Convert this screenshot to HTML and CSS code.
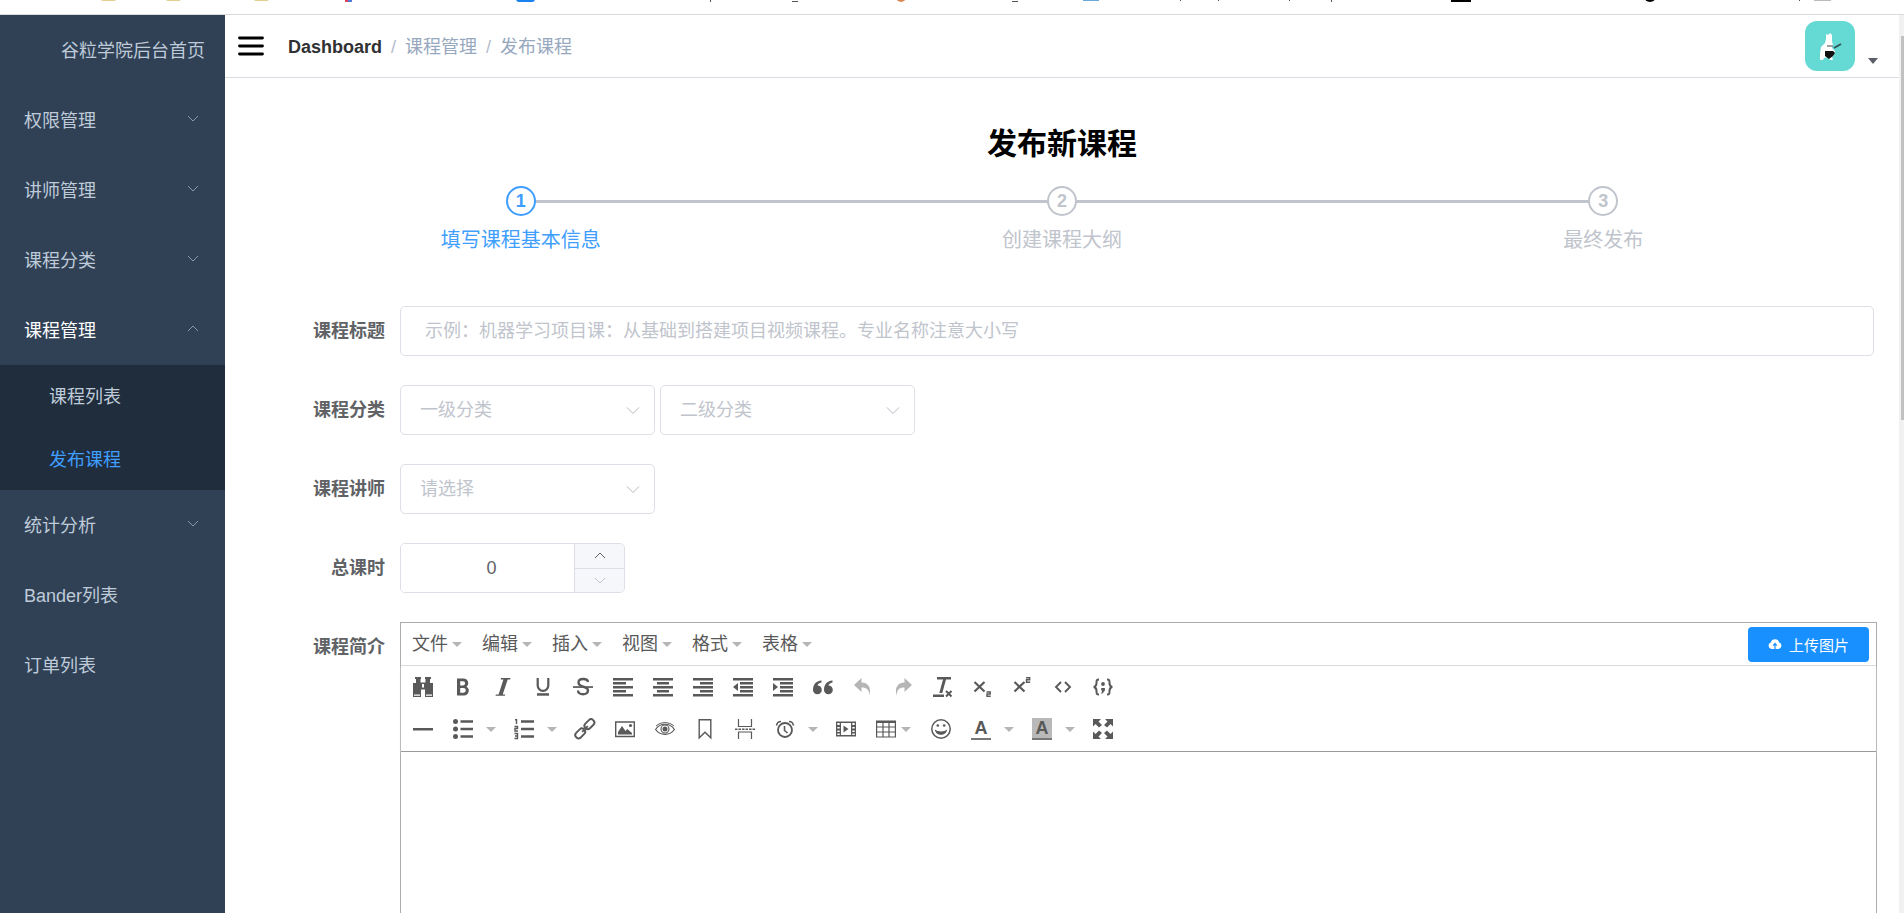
FILE: index.html
```html
<!DOCTYPE html>
<html lang="zh-CN">
<head>
<meta charset="utf-8">
<title>发布新课程</title>
<link rel="stylesheet" href="styles.css">
</head>
<body>
<svg class="bookmarks" height="14" aria-hidden="true">
  <g fill="#e2cf90"><rect x="101" y="-4" width="15" height="5" rx="2"/><rect x="166" y="-4" width="15" height="5" rx="2"/><rect x="254" y="-4" width="15" height="5" rx="2"/></g>
  <rect x="345" width="4" height="2" fill="#e0405a"/><rect x="348" width="4" height="2" fill="#5578d8"/>
  <rect x="516" y="-6" width="19" height="8" rx="3" fill="#1a82f0"/>
  <g fill="#555"><rect x="710" width="1" height="2"/><rect x="792" y="1" width="6" height="1"/><rect x="1012" y="1" width="6" height="1"/><rect x="1180" width="1" height="1"/><rect x="1218" width="1" height="1"/><rect x="1289" width="1" height="1"/><rect x="1331" width="1" height="2"/><rect x="1799" width="1" height="1"/></g>
  <circle cx="901" cy="-3" r="5" fill="#d88850"/>
  <rect x="1083" width="16" height="1" fill="#6aaad8"/>
  <rect x="1451" width="20" height="2"/><circle cx="1650" cy="-4" r="6"/>
  <rect x="1814" width="17" height="1" fill="#bbb"/>
</svg>
<div class="app">
  <nav class="sidebar">
    <a class="item home" href="#">谷粒学院后台首页</a>
    <a class="item" href="#">权限管理<svg class="arrow" viewBox="0 0 12 8"><path d="M1 1l5 5 5-5"/></svg></a>
    <a class="item" href="#">讲师管理<svg class="arrow" viewBox="0 0 12 8"><path d="M1 1l5 5 5-5"/></svg></a>
    <a class="item" href="#">课程分类<svg class="arrow" viewBox="0 0 12 8"><path d="M1 1l5 5 5-5"/></svg></a>
    <a class="item open" href="#">课程管理<svg class="arrow" viewBox="0 0 12 8"><path d="M1 6l5-5 5 5"/></svg></a>
    <div class="submenu">
      <a href="#">课程列表</a>
      <a class="active" href="#">发布课程</a>
    </div>
    <a class="item" href="#">统计分析<svg class="arrow" viewBox="0 0 12 8"><path d="M1 1l5 5 5-5"/></svg></a>
    <a class="item" href="#">Bander列表</a>
    <a class="item" href="#">订单列表</a>
  </nav>
  <div class="main">
    <header class="navbar">
      <button class="hamburger" type="button" aria-label="切换菜单"><svg width="26" height="20" viewBox="0 0 26 20"><path d="M1.500 2h23M1.500 10h23M1.500 18h23" stroke="#000" stroke-width="2.800" stroke-linecap="round"/></svg></button>
      <div class="crumbs"><a href="#">Dashboard</a><i>/</i><span>课程管理</span><i>/</i><span>发布课程</span></div>
      <button class="user" type="button" aria-label="用户菜单">
        <svg class="avatar" width="50" height="50" viewBox="0 0 50 50"><rect width="50" height="50" rx="12" fill="#65d9d3"/><path d="M21 13l2 1 2-2 2 2v6l1 4-1 3 3 3-1 4-2 2 1 3h-3l-2-3-4 1-1 2h-3v-6l1-7 4-4 1-4z" fill="#fff"/><path d="M20 30h8l2 2-2 3-4 3-4-3z" fill="#111"/><path d="M29 27l7-4" stroke="#355" stroke-width="2"/><path d="M22 25h6" stroke="#444" /></svg>
        <svg class="caret-user" width="10" height="6" viewBox="0 0 10 6"><path d="M0 0h10L5 6z" fill="#5a5e66"/></svg>
      </button>
    </header>
    <div class="content">
      <h2>发布新课程</h2>
      <ol class="steps">
        <li class="current"><b>1</b><span>填写课程基本信息</span></li>
        <li><b>2</b><span>创建课程大纲</span></li>
        <li><b>3</b><span>最终发布</span></li>
      </ol>
      <form class="form">
        <div class="row"><label for="title">课程标题</label><input id="title" class="field wide" type="text" placeholder="&#160;示例：机器学习项目课：从基础到搭建项目视频课程。专业名称注意大小写"></div>
        <div class="row"><label for="cat1">课程分类</label>
          <div class="selects">
            <div class="select"><select id="cat1" class="field"><option>一级分类</option></select><svg class="chev" viewBox="0 0 14 8"><path d="M1 1l6 6 6-6"/></svg></div>
            <div class="select"><select class="field" aria-label="二级分类"><option>二级分类</option></select><svg class="chev" viewBox="0 0 14 8"><path d="M1 1l6 6 6-6"/></svg></div>
          </div>
        </div>
        <div class="row"><label for="teacher">课程讲师</label>
          <div class="select"><select id="teacher" class="field"><option>请选择</option></select><svg class="chev" viewBox="0 0 14 8"><path d="M1 1l6 6 6-6"/></svg></div>
        </div>
        <div class="row"><label for="hours">总课时</label>
          <div class="number"><input id="hours" type="text" value="0"><div class="spin"><button type="button" aria-label="增加"><svg viewBox="0 0 12 8"><path d="M1 6l5-5 5 5" stroke="#606266"/></svg></button><button type="button" aria-label="减少"><svg viewBox="0 0 12 8"><path d="M1 1l5 5 5-5" stroke="#c0c4cc"/></svg></button></div></div>
        </div>
        <div class="row grow"><label for="intro">课程简介</label>
          <div class="editor">
            <div class="menubar">
              <button type="button">文件<i class="caret"></i></button><button type="button">编辑<i class="caret"></i></button><button type="button">插入<i class="caret"></i></button><button type="button">视图<i class="caret"></i></button><button type="button">格式<i class="caret"></i></button><button type="button">表格<i class="caret"></i></button>
              <button class="upload" type="button"><svg width="14" height="12" viewBox="0 0 14 12"><path d="M3.500 11a3.300 3.300 0 0 1-.7-6.400 4.300 4.300 0 0 1 8.400 0A3.300 3.300 0 0 1 10.500 11z" fill="#fff"/><path d="M7 11V6M5.200 7.600L7 5.500l1.800 2.100" stroke="#1890ff" fill="none" stroke-width="1.200"/></svg>上传图片</button>
            </div>
            <div class="toolbars">
              <div class="toolbar">
                <button type="button" aria-label="查找替换"><svg viewBox="0 0 20 20"><path d="M2 0h6v2H7.500v3.500h5V2H12V0h6v2h-1v4h3v14h-8v-7.500H8V20H0V6h3V2H2z"/><path d="M9 7h2v3.500H9zM1 17.500h6v1.200H1zM13 17.500h6v1.200h-6z" fill="#fff"/></svg></button>
                <button type="button" aria-label="粗体"><svg viewBox="0 0 20 20"><path fill-rule="evenodd" d="M4 1.500h6.500a4.700 4.700 0 0 1 3 8.300 4.700 4.700 0 0 1-2.500 8.700H4zM7.200 4.200V8.500H10a2.100 2.100 0 0 0 0-4.300zM7.200 11v4.700h3.300a2.300 2.300 0 0 0 0-4.700z"/></svg></button>
                <button type="button" aria-label="斜体"><svg viewBox="0 0 20 20"><path d="M8 1h9.500l-.3 1.400h-2.500L9.700 17.400h2.600l-.4 1.400H2.500l.4-1.400h2.700L10.400 2.400H7.600z"/></svg></button>
                <button type="button" aria-label="下划线"><svg viewBox="0 0 20 20"><path class="s" d="M4.700 1v7.500a5.300 5.300 0 0 0 10.600 0V1" stroke-width="2.200"/><path d="M4 16.200h12v2.500H4z"/></svg></button>
                <button type="button" aria-label="删除线"><svg viewBox="0 0 20 20"><path class="s" d="M15 5C14.500 1 5.500 1 5.500 5.500c0 5.500 9.500 3 9.500 8 0 5-10 5-10 0" stroke-width="2.400"/><path d="M0 9.200h20v1.700H0z"/></svg></button>
                <button type="button" aria-label="左对齐"><svg viewBox="0 0 20 20"><path d="M0 1h20v2.500H0zM0 5h13v2.500H0zM0 9h20v2.500H0zM0 13h13v2.500H0zM0 17h20v2.500H0z"/></svg></button>
                <button type="button" aria-label="居中"><svg viewBox="0 0 20 20"><path d="M0 1h20v2.500H0zM4 5h12v2.500H4zM0 9h20v2.500H0zM4 13h12v2.500H4zM0 17h20v2.500H0z"/></svg></button>
                <button type="button" aria-label="右对齐"><svg viewBox="0 0 20 20"><path d="M0 1h20v2.500H0zM7 5h13v2.500H7zM0 9h20v2.500H0zM7 13h13v2.500H7zM0 17h20v2.500H0z"/></svg></button>
                <button type="button" aria-label="减少缩进"><svg viewBox="0 0 20 20"><path d="M0 1h20v2.500H0zM7 5h13v2.500H7zM7 9h13v2.500H7zM7 13h13v2.500H7zM0 17h20v2.500H0zM5 6v8l-5-4z"/></svg></button>
                <button type="button" aria-label="增加缩进"><svg viewBox="0 0 20 20"><path d="M0 1h20v2.500H0zM7 5h13v2.500H7zM7 9h13v2.500H7zM7 13h13v2.500H7zM0 17h20v2.500H0zM0 6v8l5-4z"/></svg></button>
                <button type="button" aria-label="引用"><svg viewBox="0 0 20 20"><path d="M4.500 8.500a4.400 4.400 0 1 1-4.500 4.400C0 7.500 3 4.200 8.500 3.600v1.800C6 6 4.800 7 4.500 8.500z"/><path transform="translate(11)" d="M4.500 8.500a4.400 4.400 0 1 1-4.500 4.400C0 7.500 3 4.200 8.500 3.600v1.800C6 6 4.800 7 4.500 8.500z"/></svg></button>
                <button class="off" type="button" aria-label="撤销"><svg viewBox="0 0 20 20"><path d="M8.500 1v4.500c7 0 10.500 6 7.500 13 .5-5.500-2-8-7.500-8V15L1 8z"/></svg></button>
                <button class="off" type="button" aria-label="重做"><svg viewBox="0 0 20 20"><path d="M11.500 1v4.500c-7 0-10.500 6-7.500 13-.5-5.500 2-8 7.500-8V15L19 8z"/></svg></button>
                <button type="button" aria-label="清除格式"><svg viewBox="0 0 20 20"><path d="M4 0h14v2.500h-5L9.300 16H6.300L10 2.500H4zM0 17.500h11V20H0z"/><path class="s" d="M13 14l5.500 5.500M18.500 14L13 19.500" stroke-width="2"/></svg></button>
                <button type="button" aria-label="下标"><svg viewBox="0 0 20 20"><path class="s" d="M1.500 5l10 9.500M11.500 5l-10 9.500" stroke-width="2.200"/><path class="s" d="M13.500 15h3.700v2H14v2.300h3.700" stroke-width="1.400"/></svg></button>
                <button type="button" aria-label="上标"><svg viewBox="0 0 20 20"><path class="s" d="M1.500 5l10 9.500M11.500 5l-10 9.500" stroke-width="2.200"/><path class="s" d="M13 .8h3.700v2h-3.200v2.400h3.700" stroke-width="1.400"/></svg></button>
                <button type="button" aria-label="源代码"><svg viewBox="0 0 20 20"><path class="s" d="M8 5l-5 5 5 5M12 5l5 5-5 5" stroke-width="1.900"/></svg></button>
                <button type="button" aria-label="代码块"><svg viewBox="0 0 20 20"><path class="s" d="M6 2.500C3.500 2.500 3.500 3.500 3.500 6S3.200 9.500.7 10c2.500.5 2.800 1.500 2.800 4s0 3.500 2.500 3.500M14 2.500c2.500 0 2.500 1 2.500 3.500s.3 3.500 2.800 4c-2.500.5-2.800 1.500-2.800 4s0 3.500-2.500 3.500" stroke-width="2"/><circle cx="10" cy="7" r="1.900"/><path d="M8.200 11h3.700v2.500L9.500 16.500H8.100l1.200-3H8.200z"/></svg></button>
              </div>
              <div class="toolbar">
                <button type="button" aria-label="水平线"><svg viewBox="0 0 20 20"><path d="M0 9h20v2.500H0z"/></svg></button>
                <button type="button" aria-label="项目符号"><svg viewBox="0 0 20 20"><circle cx="2.500" cy="2.500" r="2.500"/><circle cx="2.500" cy="10" r="2.500"/><circle cx="2.500" cy="17.500" r="2.500"/><path d="M7.500 1.300H20v2.500H7.500zM7.500 8.800H20v2.500H7.500zM7.500 16.300H20v2.500H7.500z"/></svg></button><button class="drop" type="button" aria-label="项目符号选项"><i class="caret"></i></button>
                <button type="button" aria-label="编号列表"><svg viewBox="0 0 20 20"><path class="s" d="M1 .7h1.500V5M.5 7.500h3v2H1v2.500h3M.5 14.500h3v5h-3M1 17h2.500" stroke-width="1.400"/><path d="M7 1.300H20v2.500H7zM7 8.800H20v2.500H7zM7 16.300H20v2.500H7z"/></svg></button><button class="drop" type="button" aria-label="编号选项"><i class="caret"></i></button>
                <button type="button" aria-label="链接"><svg viewBox="0 0 20 20"><g class="s" stroke-width="1.900" transform="rotate(-45 10 10)"><rect x="-2" y="6.500" width="11" height="6.500" rx="3"/><rect x="11" y="6.500" width="11" height="6.500" rx="3"/><path d="M6 10h8"/></g></svg></button>
                <button type="button" aria-label="图片"><svg viewBox="0 0 20 20"><path class="s" d="M.7 3h18.600v14.500H.7z" stroke-width="1.400"/><path d="M3 15.500V13l4-6 3.500 5 1.800-2 4.700 4v1.500z"/><circle cx="15.500" cy="6.500" r="1.600"/></svg></button>
                <button type="button" aria-label="预览"><svg viewBox="0 0 20 20"><path class="s" d="M.6 10.500C5 3.500 15 3.500 19.400 10.500 15 17 5 17 .6 10.500z" stroke-width="1.200"/><circle class="s" cx="10" cy="10" r="4" stroke-width="1.100"/><circle cx="10" cy="10" r="2.500"/><path class="s" d="M1 7c5-4.500 13-4.500 18 0" stroke-width="1"/></svg></button>
                <button type="button" aria-label="书签"><svg viewBox="0 0 20 20"><path class="s" d="M4.200.8h11.600v18L10 13.200l-5.800 5.600z" stroke-width="1.400"/></svg></button>
                <button type="button" aria-label="分页符"><svg viewBox="0 0 20 20"><path class="s" d="M3.500 0v7.500h13V0M3.500 20v-7h13v7" stroke-width="1.200"/><path class="s" d="M0 10.300h20" stroke-width="1.400" stroke-dasharray="2.500 1"/></svg></button>
                <button type="button" aria-label="日期时间"><svg viewBox="0 0 20 20"><circle class="s" cx="10" cy="11" r="7" stroke-width="1.800"/><path class="s" d="M9.500 7v4.500l3 2.500M1.500 6.500C2 3.500 3.500 2.500 6 2.500M18.500 6.500c-.5-3-2-4-4.500-4" stroke-width="1.600"/></svg></button><button class="drop" type="button" aria-label="日期格式"><i class="caret"></i></button>
                <button type="button" aria-label="媒体"><svg viewBox="0 0 20 20"><path fill-rule="evenodd" d="M0 2.500h20v15H0zM5 4v12h10V4zM1.300 4v2h2.400V4zm0 4v1.500h2.400V8zm0 3.500V13h2.400v-1.500zm0 3V16h2.400v-1.500zM16.300 4v2h2.400V4zm0 4v1.500h2.400V8zm0 3.500V13h2.400v-1.500zm0 3V16h2.400v-1.500z"/><path d="M7.500 6.500v7L12.500 10z"/></svg></button>
                <button class="table" type="button" aria-label="表格"><svg viewBox="0 0 20 20"><path class="s" d="M.6 2.500h18.800v15.500H.6zM.6 8h18.800M.6 13h18.800M7 2.500v15M13 2.500v15" stroke-width="1.200"/><path d="M0 1.500h20v2.500H0z"/></svg><i class="caret"></i></button>
                <button type="button" aria-label="表情"><svg viewBox="0 0 20 20"><circle class="s" cx="10" cy="10" r="9.200" stroke-width="1.500"/><circle cx="6.800" cy="6.500" r="1.300"/><circle cx="13.200" cy="6.500" r="1.300"/><path d="M3.800 10.500c3 2.500 9.400 2.500 12.400 0-1 7-11.400 7-12.400 0z"/></svg></button>
                <button class="letter" type="button" aria-label="文字颜色"><span>A</span></button><button class="drop" type="button" aria-label="选择文字颜色"><i class="caret"></i></button>
                <button class="letter filled" type="button" aria-label="背景颜色"><span>A</span></button><button class="drop" type="button" aria-label="选择背景颜色"><i class="caret"></i></button>
                <button type="button" aria-label="全屏"><svg viewBox="0 0 20 20"><path d="M0 0h8L5.500 2.500l3.500 3.500-3 2.500-3.500-3.500L0 7.500zM20 0v7.500L17.500 5 14 8.500 11 6l3.500-3.500L12 0zM0 20v-7.500L2.500 15 6 11.500 9 14l-3.500 3.500L8 20zM20 20h-8l2.500-2.500L11 14l3-2.500 3.500 3.500 2.500-2.500z"/></svg></button>
              </div>
            </div>
            <textarea id="intro"></textarea>
          </div>
        </div>
      </form>
    </div>
  </div>
  <div class="scroll"><div class="thumb"></div></div>
</div>
</body>
</html>
```
FILE: styles.css
```css
* { box-sizing: border-box; }
body {
  margin: 0;
  height: 100vh;
  overflow: hidden;
  display: flex;
  flex-direction: column;
  background: #fff;
  font: 18px "Liberation Sans", "Noto Sans CJK SC", sans-serif;
  color: #606266;
}
a { color: inherit; text-decoration: none; }
i { font-style: normal; }
button, input, select, textarea { font: inherit; color: inherit; }
button { border: 0; padding: 0; background: none; }
.bookmarks { width: 100%; flex: none; display: block; }
.app { flex: 1; min-height: 0; display: flex; border-top: 1px solid #d8dadb; }

.sidebar { width: 225px; flex: none; background: #304156; color: #bfcbd9; }
.item { height: 70px; padding: 0 26px 2px 24px; display: flex; align-items: center; justify-content: space-between; white-space: nowrap; }
.item.home { padding: 0 0 2px 61px; }
.item.open { color: #fff; }
.arrow { width: 12px; height: 8px; fill: none; stroke: #8b98a7; }
.submenu { height: 125px; display: grid; grid-template-rows: 1fr 1fr; background: #1f2d3d; }
.submenu a { padding: 0 0 2px 49px; display: flex; align-items: center; }
.submenu .active { color: #409eff; }

.main { flex: 1; min-width: 0; display: flex; flex-direction: column; }
.navbar { height: 63px; flex: none; display: flex; align-items: center; padding: 0 21px 0 13px; border-bottom: 1px solid #d8dce5; }
.hamburger { display: flex; }
.crumbs { display: flex; flex: 1; align-items: baseline; margin-left: 24px; padding-bottom: 2px; color: #97a8be; }
.crumbs a { color: #303133; font-weight: bold; }
.crumbs i { margin: 0 9px; color: #b4bccc; }
.user { display: flex; align-items: flex-end; gap: 13px; }
.caret-user { margin-bottom: 7px; }

.content { flex: 1; min-height: 0; padding: 0 25px; display: flex; flex-direction: column; }
h2 { margin: 44px 0 20px; font-size: 30px; line-height: 44px; text-align: center; color: #000; }
.steps { list-style: none; margin: 0 0 51px; padding: 0; display: grid; grid-template-columns: repeat(3, 1fr); color: #c0c4cc; }
.steps li { display: flex; flex-direction: column; align-items: center; gap: 9px; position: relative; font-size: 20px; line-height: 30px; }
.steps li + li::before { content: ""; position: absolute; top: 14px; left: -50%; width: 100%; height: 3px; background: #c0c4cc; }
.steps b { position: relative; z-index: 1; width: 30px; height: 30px; border: 2px solid; border-radius: 50%; background: #fff; font-size: 18px; line-height: 26px; text-align: center; }
.steps .current { color: #409eff; }

.form { flex: 1; min-height: 0; display: flex; flex-direction: column; gap: 29px; }
.row { display: flex; flex: none; }
.row.grow { flex: 1; min-height: 0; }
.row > label { width: 150px; flex: none; padding-right: 15px; text-align: right; font-weight: bold; line-height: 50px; }
.field { height: 50px; padding: 0 19px; border: 1px solid #dcdfe6; border-radius: 5px; background: #fff; outline: 0; }
.wide { flex: 1; min-width: 0; }
.wide::placeholder { color: #c0c4cc; opacity: 1; }
.selects { display: flex; gap: 5px; }
.select { position: relative; width: 255px; }
.select select { width: 100%; appearance: none; color: #c0c4cc; }
.chev { position: absolute; right: 15px; top: 21px; width: 14px; height: 9px; fill: none; stroke: #b4b8c0; pointer-events: none; }
.number { display: flex; width: 225px; height: 50px; border: 1px solid #dcdfe6; border-radius: 5px; overflow: hidden; }
.number input { flex: 1; min-width: 0; border: 0; outline: 0; padding: 0 0 0 8px; text-align: center; }
.spin { width: 50px; display: grid; grid-template-rows: 1fr 1fr; border-left: 1px solid #dcdfe6; background: #f5f7fa; }
.spin button { display: flex; align-items: center; justify-content: center; }
.spin button + button { border-top: 1px solid #dcdfe6; }
.spin svg { width: 12px; height: 8px; fill: none; }

.editor { flex: 1; min-width: 0; margin-right: -3px; display: flex; flex-direction: column; border: 1px solid #aaadaf; border-bottom: 0; color: #595959; }
.menubar { display: flex; height: 43px; padding: 0 7px 0 11px; border-bottom: 1px solid #dadada; align-items: center; }
.menubar button { display: flex; align-items: center; gap: 4px; width: 70px; padding-bottom: 4px; white-space: nowrap; }
.menubar .caret { margin-top: 4px; }
.caret { width: 0; height: 0; border: 5px solid transparent; border-top-color: #b5b5b5; border-bottom: 0; }
.menubar .upload { margin-left: auto; width: 121px; height: 35px; padding: 0; justify-content: center; gap: 7px; border-radius: 4px; background: #1890ff; color: #fff; font-size: 15px; }
.toolbars { padding: 0 2px 1px; border-bottom: 1px solid #999c9e; box-shadow: 0 1px 2px #ddd; }
.toolbar { display: flex; height: 42px; }
.toolbar button { width: 40px; display: flex; align-items: center; justify-content: center; }
.toolbar svg { width: 20px; height: 20px; fill: #595959; overflow: visible; }
.toolbar .s { fill: none; stroke: #595959; }
.toolbar .off svg { fill: #b5b5b5; }
.toolbar .drop { width: 21px; justify-content: flex-start; padding-left: 3px; }
.toolbar .table { width: 55px; justify-content: flex-start; padding-left: 10px; gap: 5px; }
.letter span { width: 20px; height: 22px; border-bottom: 2px solid #777; font-size: 18px; font-weight: bold; line-height: 20px; text-align: center; }
.letter.filled span { background: #b9b9b9; }
textarea { flex: 1; border: 0; outline: 0; resize: none; background: #fff; }

.scroll { width: 5px; flex: none; padding: 21px 0 0 2px; background: #f1f1f1; }
.thumb { height: 384px; background: #c1c1c1; }
```
